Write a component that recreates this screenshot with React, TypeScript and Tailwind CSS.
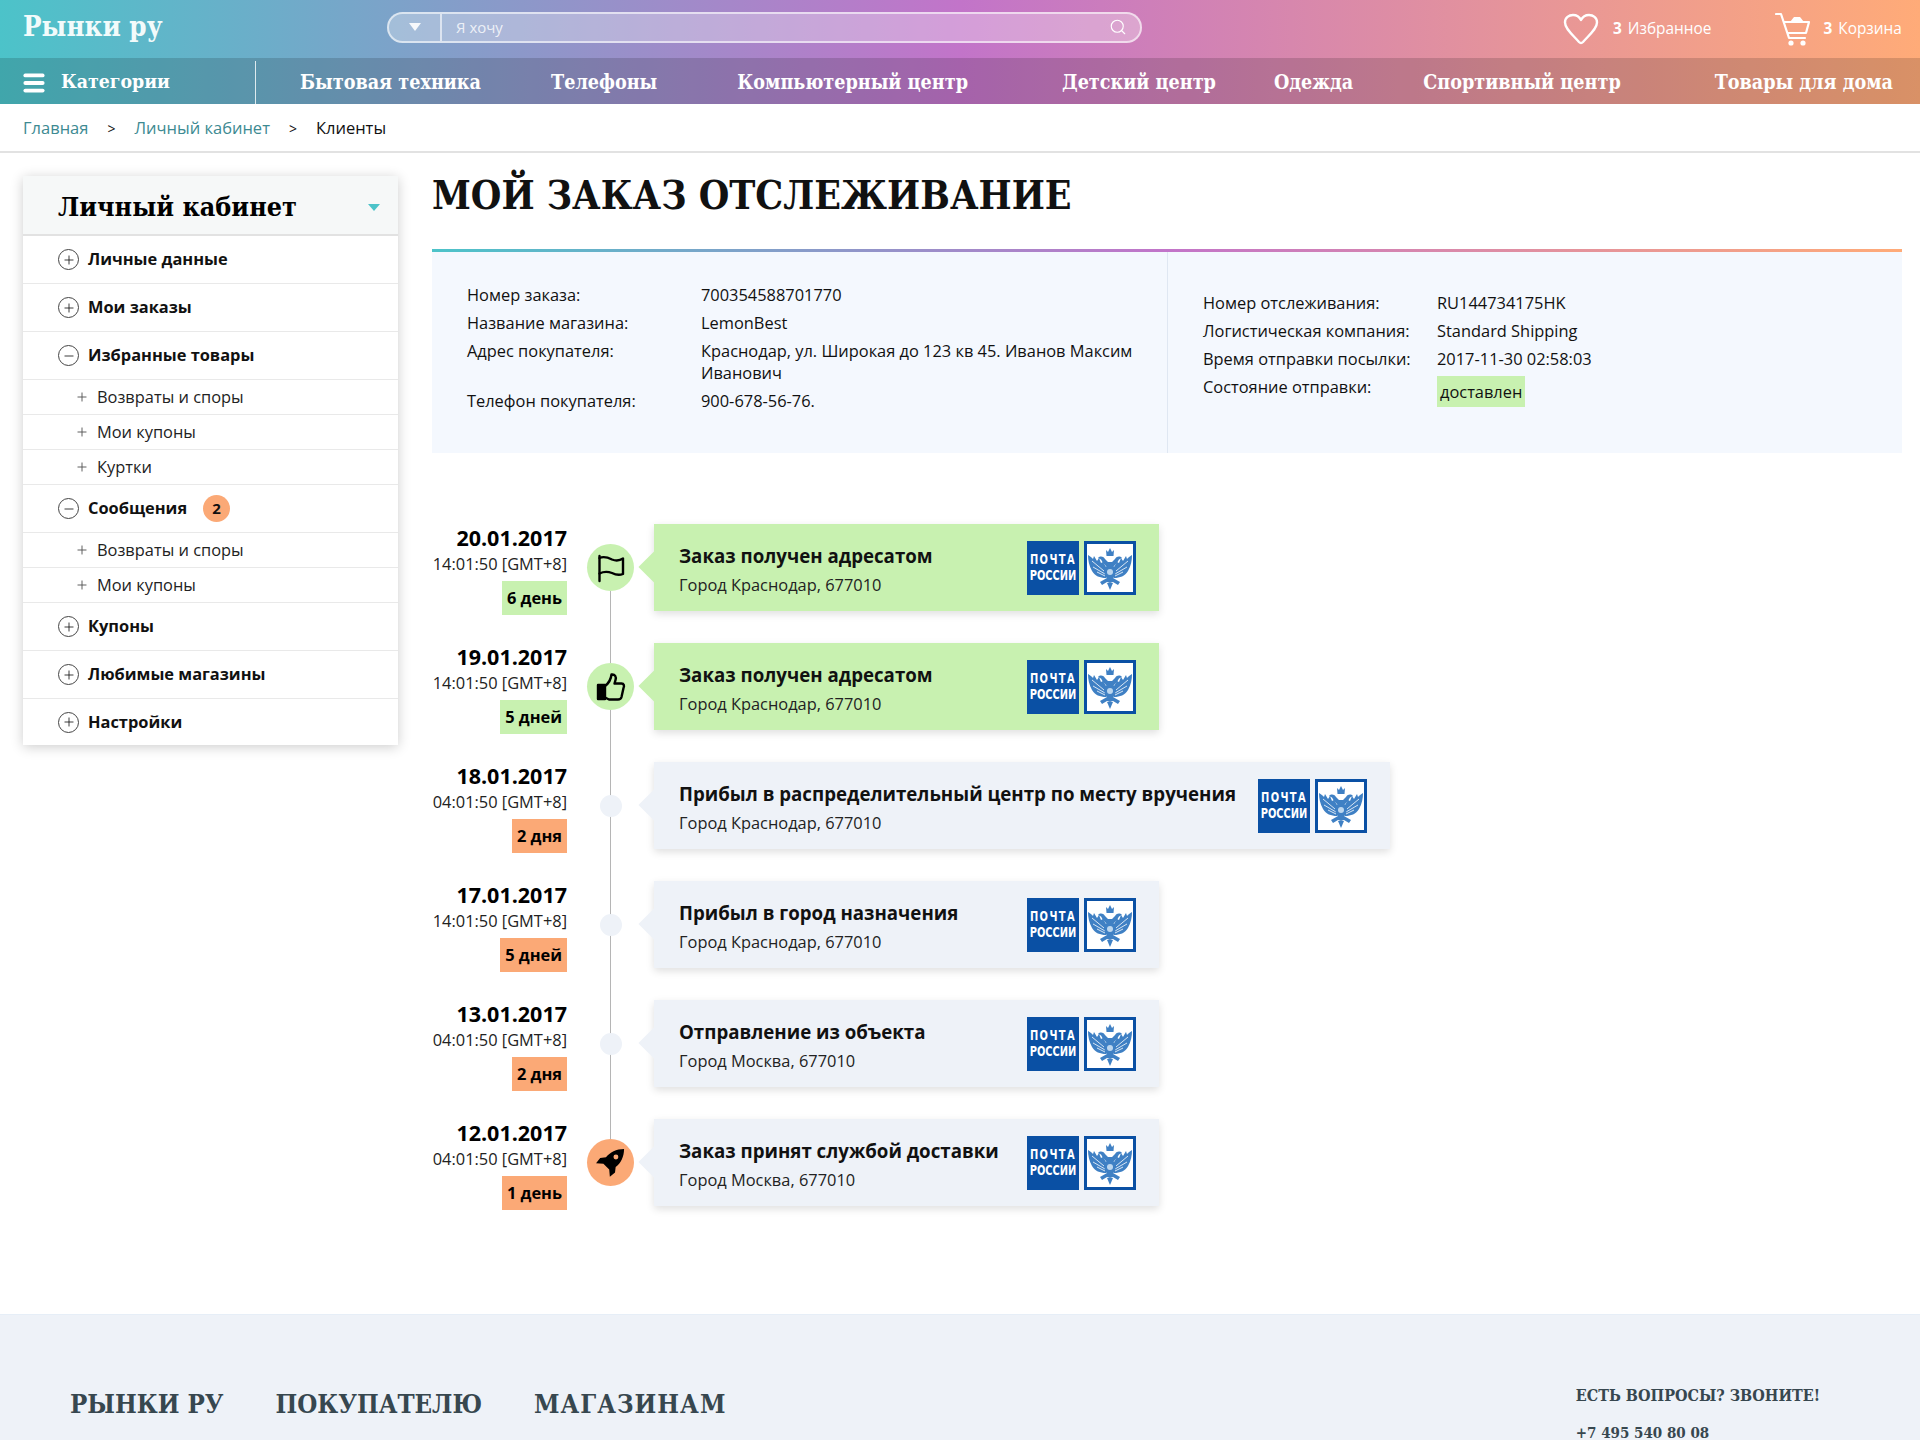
import { Menu, Minus, Plus, Search } from "lucide-react";

const body = { fontFamily: '"Open Sans", "Noto Sans", sans-serif' };
const slab = { fontFamily: '"DejaVu Serif Condensed", "DejaVu Serif", serif' };
const narrow = { fontFamily: '"DejaVu Sans Condensed", "DejaVu Sans", sans-serif' };

const navItems = [
  { label: "Бытовая техника", gap: "" },
  { label: "Телефоны", gap: "ml-[70px]" },
  { label: "Компьютерный центр", gap: "ml-[80px]" },
  { label: "Детский центр", gap: "ml-[94px]" },
  { label: "Одежда", gap: "ml-[58px]" },
  { label: "Спортивный центр", gap: "ml-[70px]" },
  { label: "Товары для дома", gap: "ml-[94px]" },
];

type MenuRow = { label: string; kind: "open" | "closed" | "sub"; badge?: string };

const menu: MenuRow[] = [
  { label: "Личные данные", kind: "closed" },
  { label: "Мои заказы", kind: "closed" },
  { label: "Избранные товары", kind: "open" },
  { label: "Возвраты и споры", kind: "sub" },
  { label: "Мои купоны", kind: "sub" },
  { label: "Куртки", kind: "sub" },
  { label: "Сообщения", kind: "open", badge: "2" },
  { label: "Возвраты и споры", kind: "sub" },
  { label: "Мои купоны", kind: "sub" },
  { label: "Купоны", kind: "closed" },
  { label: "Любимые магазины", kind: "closed" },
  { label: "Настройки", kind: "closed" },
];

type Step = {
  date: string;
  time: string;
  days: string;
  title: string;
  city: string;
  icon: "flag" | "thumb" | "dot" | "rocket";
  green?: boolean;
};

const steps: Step[] = [
  { date: "20.01.2017", time: "14:01:50 [GMT+8]", days: "6 день", title: "Заказ получен адресатом", city: "Город Краснодар, 677010", icon: "flag", green: true },
  { date: "19.01.2017", time: "14:01:50 [GMT+8]", days: "5 дней", title: "Заказ получен адресатом", city: "Город Краснодар, 677010", icon: "thumb", green: true },
  { date: "18.01.2017", time: "04:01:50 [GMT+8]", days: "2 дня", title: "Прибыл в распределительный центр по месту вручения", city: "Город Краснодар, 677010", icon: "dot" },
  { date: "17.01.2017", time: "14:01:50 [GMT+8]", days: "5 дней", title: "Прибыл в город назначения", city: "Город Краснодар, 677010", icon: "dot" },
  { date: "13.01.2017", time: "04:01:50 [GMT+8]", days: "2 дня", title: "Отправление из объекта", city: "Город Москва, 677010", icon: "dot" },
  { date: "12.01.2017", time: "04:01:50 [GMT+8]", days: "1 день", title: "Заказ принят службой доставки", city: "Город Москва, 677010", icon: "rocket" },
];

function Eagle() {
  return (
    <svg viewBox="0 0 46 46" className="h-[46px] w-[46px]" fill="#3f80c4">
      {/* крылья */}
      <path d="M1 10 C3 11 5 13 6 14 L7 11 L10 16 L12 13 L14 18 L16 17 L19 22 L19 33 C13 33 8 31 5 26 C2 21 1 15 1 10 Z" />
      <path d="M45 10 C43 11 41 13 40 14 L39 11 L36 16 L34 13 L32 18 L30 17 L27 22 L27 33 C33 33 38 31 41 26 C44 21 45 15 45 10 Z" />
      <path d="M5 16 L17 26 M6 22 L18 29 M10 27 L18 31 M41 16 L29 26 M40 22 L28 29 M36 27 L28 31" stroke="#ffffff" strokeWidth="0.8" fill="none" />
      {/* головы и корона */}
      <path d="M18 14 C16 11 13 11 11 13 L14 14.5 L16 18 L20 22 H26 L30 18 L32 14.5 L35 13 C33 11 30 11 28 14 L25 17 H21 Z" />
      <path d="M19 5 L21 7 L23 3 L25 7 L27 5 L26.5 11 H19.5 Z" />
      <ellipse cx="23" cy="27" rx="5.5" ry="7.5" />
      <circle cx="23" cy="27" r="3" fill="#bcd6ee" />
      {/* лапы и хвост */}
      <path d="M20 33 L13 37 L15 40 L20 37 L23 38 L26 37 L31 40 L33 37 L26 33 Z" />
      <path d="M20 38 L23 45 L26 38 Z" />
    </svg>
  );
}

function PostLogo() {
  return (
    <div className="flex shrink-0 gap-[5px]">
      <div className="flex h-[54px] w-[52px] flex-col items-center justify-center bg-[#0a50a4] text-center text-[11px] font-bold leading-[16px] text-white" style={narrow}>
        <span className="scale-y-[1.3] tracking-[1.4px]">ПОЧТА</span>
        <span className="scale-y-[1.3]">РОССИИ</span>
      </div>
      <div className="flex h-[54px] w-[52px] items-center justify-center border-[3px] border-[#0a50a4] bg-white">
        <Eagle />
      </div>
    </div>
  );
}

function StepIcon({ kind }: { kind: Step["icon"] }) {
  if (kind === "dot") {
    return <div className="h-[22px] w-[22px] rounded-full bg-[#eef2f8]" />;
  }
  if (kind === "rocket") {
    return (
      <div className="flex h-[47px] w-[47px] items-center justify-center rounded-full bg-[#fba976]">
        <svg viewBox="0 0 24 24" className="h-[31px] w-[31px]" fill="#000000">
          <path d="M22.5 1.5 C16.5 1.5 11.5 4 8.5 8 L4 8.5 L0.8 12.5 L6.5 13 L11 17.5 L11.5 23 L15.5 19.8 L16 15.5 C20 12.5 22.5 7.5 22.5 1.5 Z" />
          <circle cx="16.2" cy="7.8" r="1.9" fill="#fba976" />
        </svg>
      </div>
    );
  }
  return (
    <div className="flex h-[47px] w-[47px] items-center justify-center rounded-full bg-[#c8f1b0]">
      {kind === "flag" ? (
        <svg viewBox="0 0 30 30" className="h-[30px] w-[30px]" fill="none" stroke="#000000" strokeWidth="2.4" strokeLinecap="round" strokeLinejoin="round">
          <path d="M3.5 3 V28" />
          <path d="M3.5 5 C8 3 12 4.5 16 6.5 C20 8 24 7.5 27 5.5 V21 C23 22.5 19 21.5 16 20 C12 18.5 7.5 18.5 3.5 20.5" />
        </svg>
      ) : (
        <svg viewBox="0 0 30 30" className="h-[30px] w-[30px]" fill="none" stroke="#000000" strokeWidth="2.4" strokeLinejoin="round">
          <path d="M2 13 H9 V27 H2 Z" fill="#000000" />
          <path d="M9 14 C13 11 15 7 15.5 2.5 C19 2 20.5 5 19.5 8 L18.5 11.5 H25.5 C28 11.5 28.5 14 27.5 16 L25.5 25 C25 27 23.5 27.5 22 27.5 H13 L9 25.5" />
        </svg>
      )}
    </div>
  );
}

function TimelineRow({ step, first, last }: { step: Step; first: boolean; last: boolean }) {
  const color = step.green ? "bg-[#c8f1b0]" : "bg-[#eef2f8]";
  return (
    <div className="flex h-[119px]">
      <div className="mt-[-1px] w-[135px] text-right text-black">
        <div className="text-[21.5px] font-bold leading-[30px]">{step.date}</div>
        <div className="text-[16.4px] leading-[22px] text-[#222]">{step.time}</div>
        <div className="mt-[6px] flex justify-end">
          <span className={`h-[34px] px-[5px] text-[16.4px] font-bold leading-[34px] ${step.green ? "bg-[#c8f1b0]" : "bg-[#fba976]"}`}>
            {step.days}
          </span>
        </div>
      </div>
      <div className="relative flex h-[87px] w-[87px] items-center pl-[20px]">
        <div className="flex w-[47px] justify-center">
          <div className={`absolute left-[43px] w-px bg-[#b5b5b5] ${first ? "top-[43px] h-[76px]" : last ? "top-0 h-[43px]" : "top-0 h-[119px]"}`} />
          <div className="relative">
            <StepIcon kind={step.icon} />
          </div>
        </div>
      </div>
      <div className={`relative flex h-[87px] items-center gap-[22px] pl-[25px] pr-[23px] shadow-[0_3px_8px_rgba(0,0,0,0.13)] ${color}`}>
        <div className={`absolute left-[-11px] top-[32px] h-[22px] w-[22px] rotate-45 ${color}`} />
        <div className="relative w-max min-w-[326px] pt-[3px]">
          <div className="text-[18.7px] font-bold leading-[30px] text-[#111]">{step.title}</div>
          <div className="mt-[1px] text-[16.4px] leading-[26px] text-[#222]">{step.city}</div>
        </div>
        <PostLogo />
      </div>
    </div>
  );
}

function InfoRow({ label, children }: { label: string; children: React.ReactNode }) {
  return (
    <div className="flex text-[16.4px] leading-[22px] text-[#111]">
      <div className="w-[234px] shrink-0">{label}</div>
      <div className="flex-1">{children}</div>
    </div>
  );
}

export default function App() {
  return (
    <div className="h-[1440px] w-[1920px] overflow-hidden bg-white" style={body}>
      <header className="bg-[linear-gradient(90deg,#4cc3c9_0%,#c274c9_50%,#ffab78_100%)]">
        <div className="flex h-[58px] items-center pl-[23px]">
          <div className="mb-[4px] w-[364px] text-[27.5px] font-bold text-[#f2fbfb]" style={slab}>Рынки ру</div>
          <div className="mb-[4px] flex h-[31px] w-[755px] items-center rounded-full border-2 border-white/60 bg-white/30">
            <div className="flex h-full w-[53px] items-center justify-center border-r-2 border-white/60">
              <div className="h-0 w-0 border-x-[6px] border-t-[8px] border-x-transparent border-t-white/90" />
            </div>
            <span className="ml-[14px] flex-1 text-[15px] text-[#ffffffcc]">Я хочу</span>
            <Search size={18} strokeWidth={1.5} className="mr-[13px] text-white" />
          </div>
          <div className="ml-[421px] flex items-center">
            <svg viewBox="0 0 36 32" className="h-[32px] w-[36px]" fill="none" stroke="#ffffff" strokeWidth="2.4" strokeLinejoin="round">
              <path d="M18 30 C17 30 16.5 29.5 16 29 C10 22 2 16 2 9.5 C2 4.5 6 2 10 2 C13.5 2 16.5 4 18 7 C19.5 4 22.5 2 26 2 C30 2 34 4.5 34 9.5 C34 16 26 22 20 29 C19.5 29.5 19 30 18 30 Z" />
            </svg>
            <span className="ml-[14px] text-[15.4px] text-white"><b className="mr-[6px]">3</b>Избранное</span>
            <svg viewBox="0 0 36 36" className="ml-[64px] h-[36px] w-[36px]" fill="none" stroke="#ffffff" strokeWidth="2.2" strokeLinejoin="round" strokeLinecap="round">
              <path d="M1 3 H6 L14 27 H30" />
              <path d="M9 11 H34 L31 22 H13" />
              <path d="M15 11 L19 6 H25 L29 11 Z" fill="#ffffff" stroke="none" />
              <circle cx="16" cy="32" r="2.6" fill="#ffffff" stroke="none" />
              <circle cx="28" cy="32" r="2.6" fill="#ffffff" stroke="none" />
            </svg>
            <span className="ml-[12px] text-[15.4px] text-white"><b className="mr-[6px]">3</b>Корзина</span>
          </div>
        </div>
        <nav className="flex h-[46px] items-center bg-black/15 pt-[3px] text-white" style={slab}>
          <div className="flex h-full w-[256px] items-center border-r border-white/80 pl-[21px]">
            <Menu size={26} strokeWidth={3.5} />
            <span className="ml-[14px] text-[19.3px] font-bold">Категории</span>
          </div>
          <div className="flex flex-1 whitespace-nowrap pl-[44px] text-[19.6px] font-bold">
            {navItems.map((item) => (
              <span key={item.label} className={item.gap}>{item.label}</span>
            ))}
          </div>
        </nav>
      </header>

      <div className="flex h-[49px] items-center border-b-2 border-[#e2e2e2] pl-[23px] pt-[2px] text-[16.5px] text-[#111]">
        <span className="text-[#3d8a92]">Главная</span>
        <span className="mx-[19px] text-[14px]">&gt;</span>
        <span className="text-[#3d8a92]">Личный кабинет</span>
        <span className="mx-[19px] text-[14px]">&gt;</span>
        <span>Клиенты</span>
      </div>

      <div className="flex h-[1161px] items-start pl-[23px] pr-[18px] pt-[23px]">
        <aside className="w-[375px] shrink-0 bg-white shadow-[0_2px_12px_rgba(0,0,0,0.2)]">
          <div className="flex h-[60px] items-center justify-between border-b-2 border-[#e2e2e2] bg-[#f6f8f8] pl-[35px] pr-[18px] pt-[4px]">
            <span className="text-[26.7px] font-bold text-black" style={slab}>Личный кабинет</span>
            <div className="h-0 w-0 border-x-[6px] border-t-[7px] border-x-transparent border-t-[#4cc3c9]" />
          </div>
          {menu.map((row, i) =>
            row.kind === "sub" ? (
              <div key={i} className="flex h-[35px] items-center border-b border-[#e9e9e9] pl-[52px] text-[16.4px] text-[#222]">
                <Plus size={14} strokeWidth={1.6} className="text-[#555]" />
                <span className="ml-[8px]">{row.label}</span>
              </div>
            ) : (
              <div key={i} className="flex h-[48px] items-center border-b border-[#e9e9e9] pl-[35px] text-[16.4px] font-bold text-[#111] last:h-[46px] last:border-b-0">
                <span className="flex h-[21px] w-[21px] items-center justify-center rounded-full border border-[#444]">
                  {row.kind === "open" ? <Minus size={14} strokeWidth={1.4} /> : <Plus size={14} strokeWidth={1.4} />}
                </span>
                <span className="ml-[9px]">{row.label}</span>
                {row.badge && (
                  <span className="ml-[16px] flex h-[27px] w-[27px] items-center justify-center rounded-full bg-[#fba976] text-[15px]">
                    {row.badge}
                  </span>
                )}
              </div>
            )
          )}
        </aside>

        <main className="ml-[34px] flex-1">
          <h1 className="mt-[-3px] h-[50px] text-[39px] font-bold leading-[44px] text-[#111]" style={slab}>МОЙ ЗАКАЗ ОТСЛЕЖИВАНИЕ</h1>
          <div className="mt-[26px] h-[3px] bg-[linear-gradient(90deg,#4cc3c9_0%,#c274c9_50%,#ffab78_100%)]" />
          <div className="flex h-[201px] bg-[#f4f8fe]">
            <div className="flex w-[736px] flex-col justify-center gap-[6px] border-r border-[#dfe7f2] pb-[10px] pl-[35px] pr-[30px]">
              <InfoRow label="Номер заказа:">700354588701770</InfoRow>
              <InfoRow label="Название магазина:">LemonBest</InfoRow>
              <InfoRow label="Адрес покупателя:">Краснодар, ул. Широкая до 123 кв 45. Иванов Максим Иванович</InfoRow>
              <InfoRow label="Телефон покупателя:">900-678-56-76.</InfoRow>
            </div>
            <div className="flex flex-1 flex-col justify-center gap-[6px] pb-[7px] pl-[35px]">
              <InfoRow label="Номер отслеживания:">RU144734175HK</InfoRow>
              <InfoRow label="Логистическая компания:">Standard Shipping</InfoRow>
              <InfoRow label="Время отправки посылки:">2017-11-30 02:58:03</InfoRow>
              <InfoRow label="Состояние отправки:">
                <span className="inline-block h-[31px] bg-[#c8f1b0] px-[3px] leading-[31px]">доставлен</span>
              </InfoRow>
            </div>
          </div>

          <div className="mt-[71px]">
            {steps.map((step, i) => (
              <TimelineRow key={i} step={step} first={i === 0} last={i === steps.length - 1} />
            ))}
          </div>
        </main>
      </div>

      <footer className="flex h-[126px] items-start justify-between border-t border-[#e6eef7] bg-[#eef2f8] pl-[70px] pr-[100px] pt-[70px] text-[#37474f]" style={slab}>
        <div className="flex gap-[52px] text-[25.6px] font-bold">
          <span>РЫНКИ РУ</span>
          <span>ПОКУПАТЕЛЮ</span>
          <span className="tracking-[1px]">МАГАЗИНАМ</span>
        </div>
        <div className="text-[16px] font-bold">
          <div className="leading-[22px]">ЕСТЬ ВОПРОСЫ? ЗВОНИТЕ!</div>
          <div className="mt-[19px] text-[15px] leading-[14px]">+7 495 540 80 08</div>
        </div>
      </footer>
    </div>
  );
}
